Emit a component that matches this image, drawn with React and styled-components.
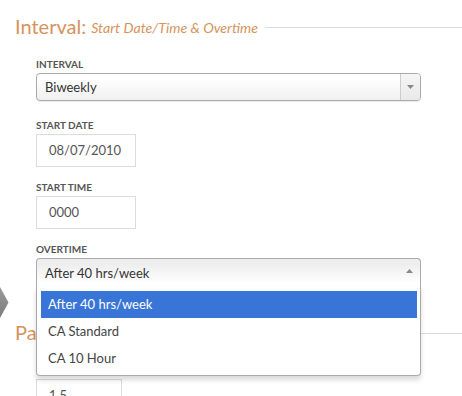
import React from "react";
import styled, { createGlobalStyle, css } from "styled-components";

const GlobalStyle = createGlobalStyle`
  html, body {
    margin: 0;
    background: #fff;
  }
  body {
    font-family: Lato, "Open Sans", sans-serif;
    color: #444;
  }
`;

const Page = styled.div`
  position: relative;
  width: 462px;
  height: 396px;
  overflow: hidden;
`;

const StepMarker = styled.svg`
  position: absolute;
  left: 0;
  top: 287px;
`;

const Section = styled.section`
  padding-top: ${(p) => p.$top || 14}px;
`;

const Heading = styled.div`
  display: flex;
  align-items: center;
  padding-left: 15px;
  height: 24px;
`;

const Title = styled.h2`
  margin: 0;
  font-size: 20px;
  line-height: 24px;
  font-weight: 400;
  color: #d6935d;
  white-space: nowrap;
`;

const Subtitle = styled.em`
  margin-left: 5px;
  margin-top: 2px;
  font-size: 14.2px;
  color: #d6935d;
  white-space: nowrap;
`;

const Rule = styled.span`
  flex: 1;
  height: 1px;
  margin-left: 7px;
  margin-top: 3px;
  background: #dcdcdc;
`;

const Fields = styled.div`
  display: flex;
  flex-direction: column;
  padding: 20px 0 0 36px;
  width: 385px;
`;

const Field = styled.div`
  margin-bottom: ${(p) => p.$after ?? 14}px;
`;

const Label = styled.div`
  font-size: 10px;
  line-height: 12px;
  font-weight: 700;
  color: #555;
  text-transform: uppercase;
  margin-bottom: 3px;
`;

const Input = styled.div`
  box-sizing: border-box;
  width: ${(p) => p.$width || 100}px;
  height: 33px;
  padding-left: 12px;
  border: 1px solid #dcdcdc;
  font-size: 13px;
  line-height: 31px;
  color: #555;
`;

const SelectWrap = styled.div`
  position: relative;
  z-index: 2;
`;

const Single = styled.div`
  box-sizing: border-box;
  display: flex;
  align-items: center;
  height: 28px;
  padding-left: 8px;
  border: 1px solid #aaa;
  border-radius: 4px;
  font-size: 13px;
  color: #333;
  background: linear-gradient(#fff 20%, #f7f7f7 60%, #f0f0f0 100%);
  box-shadow: 0 1px 1px rgba(0, 0, 0, 0.08);
  ${(p) =>
    p.$open &&
    css`
      border-bottom: none;
      border-radius: 4px 4px 0 0;
      background: linear-gradient(#eee 20%, #fff 90%);
      box-shadow: none;
    `}
`;

const Value = styled.span`
  flex: 1;
`;

const ArrowBox = styled.span`
  display: flex;
  align-items: center;
  justify-content: center;
  align-self: stretch;
  width: 19px;
  border-left: ${(p) => (p.$plain ? "none" : "1px solid #ccc")};
  border-radius: 0 3px 3px 0;
  background: ${(p) =>
    p.$plain ? "transparent" : "linear-gradient(#f6f6f6, #e9e9e9)"};
  margin-right: ${(p) => (p.$plain ? 1 : 0)}px;
  padding-bottom: ${(p) => (p.$plain ? 4 : 0)}px;
`;

const Drop = styled.ul`
  position: absolute;
  top: 28px;
  left: 0;
  right: 0;
  box-sizing: border-box;
  margin: 0;
  padding: 5px 3px 3px 4px;
  list-style: none;
  background: #fff;
  border: 1px solid #aaa;
  border-top: none;
  border-radius: 0 0 4px 4px;
  box-shadow: 0 4px 5px rgba(0, 0, 0, 0.15);
`;

const Option = styled.li`
  height: 27px;
  line-height: 27px;
  padding-left: 7px;
  font-size: 13px;
  color: ${(p) => (p.$active ? "#fff" : "#444")};
  background: ${(p) => (p.$active ? "#3875d7" : "transparent")};
`;

const Caret = ({ up }) => (
  <svg width="7" height="4" viewBox="0 0 7 4">
    <path d={up ? "M0 4 L3.5 0 L7 4 Z" : "M0 0 L7 0 L3.5 4 Z"} fill="#888" />
  </svg>
);

const overtimeOptions = ["After 40 hrs/week", "CA Standard", "CA 10 Hour"];

export default function App() {
  return (
    <Page>
      <GlobalStyle />
      <StepMarker width="9" height="31" viewBox="0 0 9 31">
        <defs>
          <linearGradient id="stepGrad" x1="0" y1="0" x2="0" y2="1">
            <stop offset="0" stopColor="#9a9a9a" />
            <stop offset="1" stopColor="#7c7c7c" />
          </linearGradient>
        </defs>
        <path d="M0 0 L8.5 15.5 L0 31 Z" fill="url(#stepGrad)" />
      </StepMarker>

      <Section>
        <Heading>
          <Title>Interval:</Title>
          <Subtitle>Start Date/Time &amp; Overtime</Subtitle>
          <Rule />
        </Heading>
        <Fields>
          <Field $after={18}>
            <Label>Interval</Label>
            <SelectWrap>
              <Single>
                <Value>Biweekly</Value>
                <ArrowBox>
                  <Caret />
                </ArrowBox>
              </Single>
            </SelectWrap>
          </Field>
          <Field>
            <Label>Start Date</Label>
            <Input>08/07/2010</Input>
          </Field>
          <Field>
            <Label>Start Time</Label>
            <Input>0000</Input>
          </Field>
          <Field $after={0}>
            <Label>Overtime</Label>
            <SelectWrap>
              <Single $open>
                <Value>After 40 hrs/week</Value>
                <ArrowBox $plain>
                  <Caret up />
                </ArrowBox>
              </Single>
              <Drop>
                {overtimeOptions.map((o, i) => (
                  <Option key={o} $active={i === 0}>
                    {o}
                  </Option>
                ))}
              </Drop>
            </SelectWrap>
          </Field>
        </Fields>
      </Section>

      <Section $top={34}>
        <Heading>
          <Title>Pay Rate:</Title>
          <Subtitle>Overtime</Subtitle>
          <Rule />
        </Heading>
        <Fields>
          <Field>
            <Label>Overtime Rate</Label>
            <Input $width={86}>1.5</Input>
          </Field>
        </Fields>
      </Section>
    </Page>
  );
}
